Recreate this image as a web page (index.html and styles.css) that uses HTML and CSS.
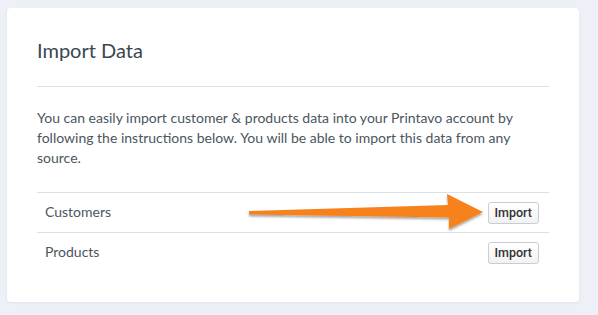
FILE: index.html
```html
<!DOCTYPE html>
<html lang="en">
<head>
    <meta charset="UTF-8">
    <meta name="viewport" content="width=device-width, initial-scale=1.0">
    <title>Import Data</title>
    <link rel="stylesheet" href="styles.css">
</head>
<body>
    <div class="card">
        <h1 class="card-title">Import Data</h1>
        <p class="intro">You can easily import customer &amp; products data into your Printavo account by following the instructions below. You will be able to import this data from any source.</p>

        <div class="import-list">
            <div class="import-row">
                <span class="import-name">Customers</span>
                <button type="button" class="btn">Import</button>
            </div>
            <div class="import-row">
                <span class="import-name">Products</span>
                <button type="button" class="btn">Import</button>
            </div>
        </div>

        <!-- annotation arrow pointing at the first button -->
        <svg class="arrow" width="572" height="294" viewBox="0 0 572 294">
            <defs>
                <filter id="shadow" x="-10%" y="-50%" width="120%" height="200%">
                    <feDropShadow dx="0" dy="2" stdDeviation="1" flood-color="#000" flood-opacity="0.35"/>
                </filter>
            </defs>
            <path d="M242 203 L441 197 L440 186 L476 204 L442 221 L442 209.5 L242 206.5 Z" fill="#f7821f" filter="url(#shadow)"/>
        </svg>
    </div>
</body>
</html>
```

FILE: styles.css
```css
body{
    margin: 0;
    background: #edf1f7;
    padding: 8px 19px 13px 7px;
    font-family: Lato, "Liberation Sans", sans-serif;
    color: #4b5660;
}
.card{
    position: relative;
    width: 572px;
    height: 294px;
    box-sizing: border-box;
    padding: 30px 30px 0 30px;
    background: #fff;
    border-radius: 4px;
    box-shadow: 0 1px 3px rgba(40, 60, 90, 0.08);
}
.card-title{
    margin: 0;
    padding-bottom: 24px;
    border-bottom: 1px solid #dbe1e7;
    font-size: 20px;
    line-height: 24px;
    font-weight: 400;
    color: #3a4651;
}
.intro{
    margin: 21px 0 24px 0;
    font-size: 14px;
    line-height: 20px;
}
.import-row{
    display: flex;
    align-items: center;
    justify-content: space-between;
    height: 39px;
    padding: 0 10px 0 8px;
    border-top: 1px solid #dbe1e7;
    font-size: 14px;
}
.import-name{
    margin-bottom: 3px;
}
.btn{
    height: 22px;
    padding: 0 6px;
    border: 1px solid #c9cdd1;
    border-radius: 3px;
    background: linear-gradient(#ffffff, #f1f2f3);
    font-family: Roboto, "Liberation Sans", sans-serif;
    font-size: 12.5px;
    font-weight: 500;
    color: #333;
}
.arrow{
    position: absolute;
    left: 0;
    top: 0;
    pointer-events: none;
}
```
